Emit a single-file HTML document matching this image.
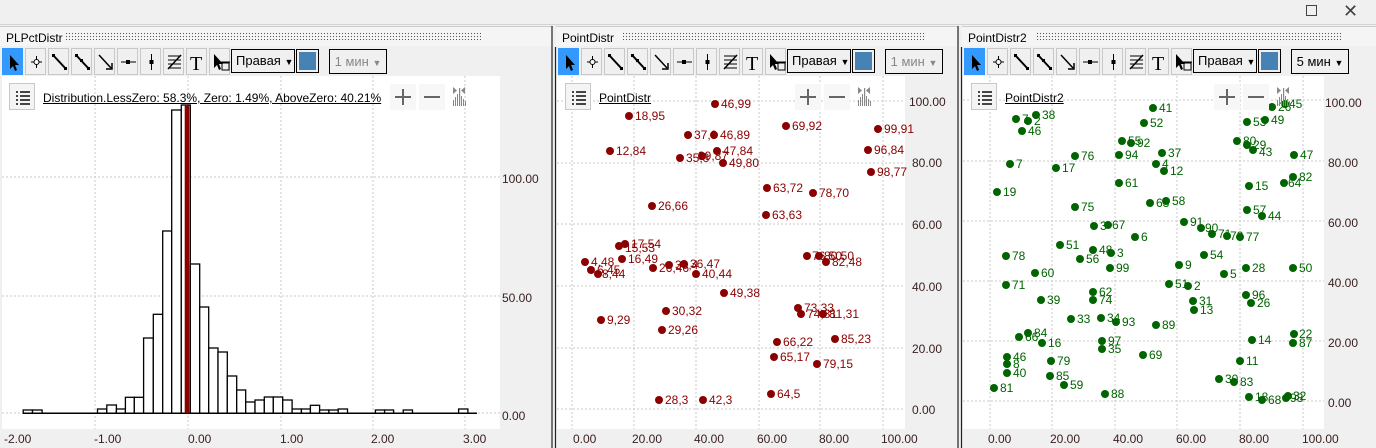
<!DOCTYPE html>
<html><head><meta charset="utf-8"><style>
*{margin:0;padding:0;box-sizing:border-box}
body{width:1376px;height:448px;overflow:hidden;background:#f0f0f0;font-family:"Liberation Sans",sans-serif;position:relative}
.a{position:absolute}
.title{font-size:12px;color:#000}
.dots{height:8px;background-image:radial-gradient(#555 0.6px,transparent 0.8px);background-size:3px 3px}
.btn{position:absolute;top:48px;width:21px;height:27px;background:#f0f0f0;border:1px solid #c8c8c8}
.btn.sel{background:#3399ff;border-color:#3399ff}
.btn svg{position:absolute;left:0;top:0}
.dd{position:absolute;top:49px;height:24px;border:1px solid #000;background:#f0f0f0;font-size:13px;line-height:22px;padding-left:4px;white-space:nowrap;overflow:hidden}
.col{position:absolute;top:49px;width:23px;height:24px;border:1px solid #000;background:#f0f0f0}
.col div{position:absolute;left:2px;top:2px;width:17px;height:18px;background:#4682b4}
.tf{position:absolute;top:49px;width:58px;height:25px;border:1px solid #000;background:#f0f0f0;font-size:13px;line-height:23px;text-align:center;color:#888;white-space:nowrap}
.lst{position:absolute;top:83px;width:26px;height:27px;border:1px solid #c8c8c8;background:#f4f4f4}
.ct{position:absolute;top:91px;font-size:12px;text-decoration:underline;color:#000;white-space:nowrap}
</style></head><body>
<div class="a" style="left:0;top:0;width:1376px;height:25px;background:#f0f0f0;border-bottom:1px solid #d4d4d4"></div>
<div class="a" style="left:1306px;top:5px;width:11px;height:11px;border:1px solid #444"></div>
<div class="a" style="left:1343px;top:1px;font-size:18px;color:#444">✕</div>

<div class="a" style="left:0;top:26px;width:553px;height:20px;background:#f5f5f5;border-top:1px solid #ccc"></div>
<div class="a title" style="left:6px;top:31px">PLPctDistr</div>
<div class="a dots" style="left:65px;top:32px;width:416px"></div>
<div class="a" style="left:556px;top:26px;width:402px;height:20px;background:#f5f5f5;border-top:1px solid #ccc"></div>
<div class="a title" style="left:562px;top:31px">PointDistr</div>
<div class="a dots" style="left:622px;top:32px;width:304px"></div>
<div class="a" style="left:962px;top:26px;width:414px;height:20px;background:#f5f5f5;border-top:1px solid #ccc"></div>
<div class="a title" style="left:968px;top:31px">PointDistr2</div>
<div class="a dots" style="left:1036px;top:32px;width:306px"></div>

<svg class="a" style="left:0;top:0" width="1376" height="448" xmlns="http://www.w3.org/2000/svg" font-family="Liberation Sans, sans-serif">
<rect x="2" y="76" width="498" height="353" fill="#fff"/>
<rect x="500" y="76" width="52" height="372" fill="#f0f0f0"/>
<g stroke="#c8c8c8" stroke-dasharray="2,2">
<line x1="95" y1="76" x2="95" y2="429"/><line x1="188" y1="76" x2="188" y2="429"/><line x1="281" y1="76" x2="281" y2="429"/><line x1="373" y1="76" x2="373" y2="429"/><line x1="465" y1="76" x2="465" y2="429"/>
<line x1="2" y1="177" x2="500" y2="177"/><line x1="2" y1="296" x2="500" y2="296"/><line x1="2" y1="413" x2="500" y2="413"/>
</g>
<g fill="#fff" stroke="#000" stroke-width="1.3">
<rect x="23.2" y="410" width="9.3" height="3.3"/><rect x="32.5" y="410" width="9.6" height="3.3"/>
<rect x="97.5" y="409" width="9.3" height="4.3"/><rect x="106.8" y="405" width="9.6" height="8.3"/><rect x="116.4" y="409" width="9" height="4.3"/>
<rect x="125.4" y="397.3" width="8.9" height="16"/><rect x="134.3" y="397.3" width="9.3" height="16"/>
<rect x="143.6" y="338" width="9.7" height="75.3"/><rect x="153.3" y="314.3" width="9.4" height="99"/>
<rect x="162.7" y="231" width="9" height="182.3"/><rect x="171.7" y="110" width="9.6" height="303.3"/>
<rect x="181.3" y="105" width="9" height="308.3"/><rect x="190.3" y="264" width="9.4" height="149.3"/>
<rect x="199.7" y="307" width="9" height="106.3"/><rect x="208.7" y="348" width="9.3" height="65.3"/>
<rect x="218" y="352" width="9.3" height="61.3"/><rect x="227.3" y="376" width="9.4" height="37.3"/>
<rect x="236.7" y="390" width="9" height="23.3"/><rect x="245.7" y="402" width="9.3" height="11.3"/>
<rect x="255" y="400" width="9.3" height="13.3"/><rect x="264.3" y="397" width="9" height="16.3"/>
<rect x="273.3" y="397" width="9.4" height="16.3"/><rect x="282.7" y="400" width="9.4" height="13.3"/>
<rect x="292.1" y="409" width="9.3" height="4.3"/><rect x="301.4" y="409" width="9" height="4.3"/>
<rect x="310.4" y="405.3" width="9.2" height="8"/><rect x="319.6" y="410" width="9.3" height="3.3"/>
<rect x="328.9" y="410" width="9.3" height="3.3"/><rect x="338.2" y="409" width="9.3" height="4.3"/>
<rect x="375.4" y="410" width="9.2" height="3.3"/><rect x="384.6" y="410" width="9" height="3.3"/>
<rect x="403.2" y="410" width="9.3" height="3.3"/><rect x="458.6" y="409" width="9.3" height="4.3"/>
</g>
<line x1="23" y1="413.3" x2="477" y2="413.3" stroke="#000" stroke-width="1.5"/>
<rect x="184.7" y="105" width="4.6" height="308.3" fill="#8b0000"/>
<g font-size="12" fill="#3a2020">
<text x="502" y="183">100.00</text><text x="502" y="302">50.00</text><text x="502" y="420">0.00</text>
<text x="4" y="443">-2.00</text><text x="94" y="443">-1.00</text><text x="188" y="443">0.00</text><text x="280" y="443">1.00</text><text x="371" y="443">2.00</text><text x="463" y="443">3.00</text>
</g>
<line x1="552" y1="26" x2="552" y2="448" stroke="#222" stroke-width="1.2"/>
<line x1="555.5" y1="47" x2="555.5" y2="448" stroke="#222" stroke-width="1.2"/>

<rect x="557" y="76" width="348" height="353" fill="#fff"/>
<rect x="905" y="76" width="52" height="372" fill="#f0f0f0"/>
<g stroke="#c8c8c8" stroke-dasharray="2,2">
<line x1="572" y1="76" x2="572" y2="429"/><line x1="634" y1="76" x2="634" y2="429"/><line x1="696" y1="76" x2="696" y2="429"/><line x1="759" y1="76" x2="759" y2="429"/><line x1="820" y1="76" x2="820" y2="429"/><line x1="883" y1="76" x2="883" y2="429"/>
<line x1="557" y1="101" x2="905" y2="101"/><line x1="557" y1="163" x2="905" y2="163"/><line x1="557" y1="224" x2="905" y2="224"/><line x1="557" y1="286" x2="905" y2="286"/><line x1="557" y1="348" x2="905" y2="348"/><line x1="557" y1="409" x2="905" y2="409"/>
</g>
<g font-size="12" fill="#3a2020">
<text x="909" y="106">100.00</text><text x="912" y="167">80.00</text><text x="912" y="229">60.00</text><text x="912" y="291">40.00</text><text x="912" y="353">20.00</text><text x="912" y="414">0.00</text>
<text x="573" y="443">0.00</text><text x="632" y="443">20.00</text><text x="694" y="443">40.00</text><text x="757" y="443">60.00</text><text x="819" y="443">80.00</text><text x="881" y="443">100.00</text>
</g>
<g fill="#8b0000" font-size="12">
<circle cx="715" cy="104" r="4"/><text x="721" y="108">46,99</text>
<circle cx="629" cy="116" r="4"/><text x="635" y="120">18,95</text>
<circle cx="786" cy="126" r="4"/><text x="792" y="130">69,92</text>
<circle cx="878" cy="129" r="4"/><text x="884" y="133">99,91</text>
<circle cx="688" cy="135" r="4"/><text x="694" y="139">37,9</text>
<circle cx="714" cy="135" r="4"/><text x="720" y="139">46,89</text>
<circle cx="717" cy="151" r="4"/><text x="723" y="155">47,84</text>
<circle cx="610" cy="151" r="4"/><text x="616" y="155">12,84</text>
<circle cx="868" cy="150" r="4"/><text x="874" y="154">96,84</text>
<circle cx="680" cy="158" r="4"/><text x="686" y="162">35,8</text>
<circle cx="702" cy="156" r="4"/><text x="698" y="160">39,87</text>
<circle cx="723" cy="163" r="4"/><text x="729" y="167">49,80</text>
<circle cx="871" cy="172" r="4"/><text x="877" y="176">98,77</text>
<circle cx="767" cy="188" r="4"/><text x="773" y="192">63,72</text>
<circle cx="813" cy="193" r="4"/><text x="819" y="197">78,70</text>
<circle cx="652" cy="206" r="4"/><text x="658" y="210">26,66</text>
<circle cx="766" cy="215" r="4"/><text x="772" y="219">63,63</text>
<circle cx="625" cy="244" r="4"/><text x="631" y="248">17,54</text>
<circle cx="619" cy="246" r="4"/><text x="625" y="252">15,53</text>
<circle cx="807" cy="256" r="4"/><text x="812" y="260">76,50</text>
<circle cx="819" cy="256" r="4"/><text x="824" y="260">80,50</text>
<circle cx="826" cy="262" r="4"/><text x="832" y="266">82,48</text>
<circle cx="585" cy="262" r="4"/><text x="591" y="266">4,48</text>
<circle cx="622" cy="259" r="4"/><text x="628" y="263">16,49</text>
<circle cx="653" cy="268" r="4"/><text x="659" y="272">26,46</text>
<circle cx="669" cy="265" r="4"/><text x="675" y="269">30,4</text>
<circle cx="684" cy="264" r="4"/><text x="690" y="268">36,47</text>
<circle cx="591" cy="270" r="4"/><text x="597" y="274">6,45</text>
<circle cx="598" cy="274" r="4"/><text x="602" y="278">8,44</text>
<circle cx="696" cy="274" r="4"/><text x="702" y="278">40,44</text>
<circle cx="724" cy="293" r="4"/><text x="730" y="297">49,38</text>
<circle cx="798" cy="308" r="4"/><text x="804" y="312">73,33</text>
<circle cx="801" cy="314" r="4"/><text x="807" y="318">74,31</text>
<circle cx="823" cy="314" r="4"/><text x="829" y="318">81,31</text>
<circle cx="666" cy="311" r="4"/><text x="672" y="315">30,32</text>
<circle cx="601" cy="320" r="4"/><text x="607" y="324">9,29</text>
<circle cx="662" cy="330" r="4"/><text x="668" y="334">29,26</text>
<circle cx="835" cy="339" r="4"/><text x="841" y="343">85,23</text>
<circle cx="777" cy="342" r="4"/><text x="783" y="346">66,22</text>
<circle cx="774" cy="357" r="4"/><text x="780" y="361">65,17</text>
<circle cx="817" cy="364" r="4"/><text x="823" y="368">79,15</text>
<circle cx="771" cy="394" r="4"/><text x="777" y="398">64,5</text>
<circle cx="659" cy="400" r="4"/><text x="665" y="404">28,3</text>
<circle cx="703" cy="400" r="4"/><text x="709" y="404">42,3</text>
</g>
<line x1="958" y1="26" x2="958" y2="448" stroke="#222" stroke-width="1.2"/>
<line x1="961.5" y1="47" x2="961.5" y2="448" stroke="#222" stroke-width="1.2"/>

<rect x="963" y="76" width="361" height="353" fill="#fff"/>
<rect x="1324" y="76" width="52" height="372" fill="#f0f0f0"/>
<g stroke="#c8c8c8" stroke-dasharray="2,2">
<line x1="990" y1="76" x2="990" y2="429"/><line x1="1052" y1="76" x2="1052" y2="429"/><line x1="1115" y1="76" x2="1115" y2="429"/><line x1="1177" y1="76" x2="1177" y2="429"/><line x1="1240" y1="76" x2="1240" y2="429"/><line x1="1303" y1="76" x2="1303" y2="429"/>
<line x1="963" y1="100" x2="1324" y2="100"/><line x1="963" y1="161" x2="1324" y2="161"/><line x1="963" y1="221" x2="1324" y2="221"/><line x1="963" y1="281" x2="1324" y2="281"/><line x1="963" y1="341" x2="1324" y2="341"/><line x1="963" y1="401" x2="1324" y2="401"/>
</g>
<g font-size="12" fill="#3a2020">
<text x="1325" y="107">100.00</text><text x="1328" y="167">80.00</text><text x="1328" y="227">60.00</text><text x="1328" y="287">40.00</text><text x="1328" y="347">20.00</text><text x="1328" y="407">0.00</text>
<text x="988" y="443">0.00</text><text x="1050" y="443">20.00</text><text x="1113" y="443">40.00</text><text x="1176" y="443">60.00</text><text x="1239" y="443">80.00</text><text x="1302" y="443">100.00</text>
</g>
<g fill="#006400" font-size="12">
<circle cx="1153" cy="108" r="4"/><text x="1159" y="112">41</text>
<circle cx="1272" cy="107" r="4"/><text x="1278" y="111">26</text>
<circle cx="1285" cy="104" r="4"/><text x="1289" y="108">45</text>
<circle cx="1265" cy="120" r="4"/><text x="1271" y="124">49</text>
<circle cx="1016" cy="119" r="4"/><text x="1022" y="123">7</text>
<circle cx="1036" cy="115" r="4"/><text x="1042" y="119">38</text>
<circle cx="1028" cy="121" r="4"/><text x="1034" y="125">2</text>
<circle cx="1022" cy="131" r="4"/><text x="1028" y="135">46</text>
<circle cx="1144" cy="123" r="4"/><text x="1150" y="127">52</text>
<circle cx="1247" cy="122" r="4"/><text x="1253" y="126">53</text>
<circle cx="1122" cy="141" r="4"/><text x="1128" y="145">55</text>
<circle cx="1131" cy="143" r="4"/><text x="1137" y="147">92</text>
<circle cx="1237" cy="141" r="4"/><text x="1243" y="145">80</text>
<circle cx="1247" cy="145" r="4"/><text x="1253" y="149">29</text>
<circle cx="1253" cy="150" r="4"/><text x="1259" y="156">43</text>
<circle cx="1162" cy="153" r="4"/><text x="1168" y="157">37</text>
<circle cx="1294" cy="155" r="4"/><text x="1300" y="159">47</text>
<circle cx="1119" cy="155" r="4"/><text x="1125" y="159">94</text>
<circle cx="1075" cy="156" r="4"/><text x="1081" y="160">76</text>
<circle cx="1010" cy="164" r="4"/><text x="1016" y="168">7</text>
<circle cx="1056" cy="168" r="4"/><text x="1062" y="172">17</text>
<circle cx="1156" cy="164" r="4"/><text x="1162" y="168">4</text>
<circle cx="1164" cy="171" r="4"/><text x="1170" y="175">12</text>
<circle cx="1293" cy="177" r="4"/><text x="1299" y="181">82</text>
<circle cx="1284" cy="183" r="4"/><text x="1288" y="187">64</text>
<circle cx="1249" cy="186" r="4"/><text x="1255" y="190">15</text>
<circle cx="1119" cy="183" r="4"/><text x="1125" y="187">61</text>
<circle cx="997" cy="192" r="4"/><text x="1003" y="196">19</text>
<circle cx="1150" cy="203" r="4"/><text x="1156" y="207">63</text>
<circle cx="1166" cy="201" r="4"/><text x="1172" y="205">58</text>
<circle cx="1075" cy="207" r="4"/><text x="1081" y="211">75</text>
<circle cx="1247" cy="210" r="4"/><text x="1253" y="214">57</text>
<circle cx="1262" cy="216" r="4"/><text x="1268" y="220">44</text>
<circle cx="1184" cy="222" r="4"/><text x="1190" y="226">91</text>
<circle cx="1201" cy="228" r="4"/><text x="1205" y="232">90</text>
<circle cx="1094" cy="226" r="4"/><text x="1100" y="230">3</text>
<circle cx="1108" cy="225" r="4"/><text x="1112" y="229">67</text>
<circle cx="1212" cy="234" r="4"/><text x="1218" y="238">71</text>
<circle cx="1227" cy="236" r="4"/><text x="1230" y="240">72</text>
<circle cx="1240" cy="237" r="4"/><text x="1246" y="241">77</text>
<circle cx="1135" cy="237" r="4"/><text x="1141" y="241">6</text>
<circle cx="1060" cy="245" r="4"/><text x="1066" y="249">51</text>
<circle cx="1093" cy="250" r="4"/><text x="1099" y="254">48</text>
<circle cx="1111" cy="253" r="4"/><text x="1117" y="257">3</text>
<circle cx="1204" cy="255" r="4"/><text x="1210" y="259">54</text>
<circle cx="1080" cy="259" r="4"/><text x="1086" y="263">56</text>
<circle cx="1006" cy="256" r="4"/><text x="1012" y="260">78</text>
<circle cx="1179" cy="265" r="4"/><text x="1185" y="269">9</text>
<circle cx="1110" cy="268" r="4"/><text x="1116" y="272">99</text>
<circle cx="1246" cy="268" r="4"/><text x="1252" y="272">28</text>
<circle cx="1293" cy="268" r="4"/><text x="1299" y="272">50</text>
<circle cx="1035" cy="273" r="4"/><text x="1041" y="277">60</text>
<circle cx="1224" cy="274" r="4"/><text x="1230" y="278">5</text>
<circle cx="1169" cy="284" r="4"/><text x="1175" y="288">51</text>
<circle cx="1188" cy="286" r="4"/><text x="1194" y="290">2</text>
<circle cx="1006" cy="285" r="4"/><text x="1012" y="289">71</text>
<circle cx="1093" cy="292" r="4"/><text x="1099" y="296">62</text>
<circle cx="1093" cy="300" r="4"/><text x="1099" y="304">74</text>
<circle cx="1246" cy="295" r="4"/><text x="1252" y="299">96</text>
<circle cx="1041" cy="300" r="4"/><text x="1047" y="304">39</text>
<circle cx="1193" cy="301" r="4"/><text x="1199" y="305">31</text>
<circle cx="1251" cy="303" r="4"/><text x="1257" y="307">26</text>
<circle cx="1194" cy="310" r="4"/><text x="1200" y="314">13</text>
<circle cx="1071" cy="319" r="4"/><text x="1077" y="323">33</text>
<circle cx="1101" cy="318" r="4"/><text x="1107" y="322">34</text>
<circle cx="1116" cy="322" r="4"/><text x="1122" y="326">93</text>
<circle cx="1156" cy="325" r="4"/><text x="1162" y="329">89</text>
<circle cx="1028" cy="333" r="4"/><text x="1034" y="337">84</text>
<circle cx="1019" cy="337" r="4"/><text x="1025" y="341">66</text>
<circle cx="1042" cy="343" r="4"/><text x="1048" y="347">16</text>
<circle cx="1102" cy="341" r="4"/><text x="1108" y="345">97</text>
<circle cx="1102" cy="349" r="4"/><text x="1108" y="353">35</text>
<circle cx="1252" cy="340" r="4"/><text x="1258" y="344">14</text>
<circle cx="1294" cy="334" r="4"/><text x="1299" y="338">22</text>
<circle cx="1293" cy="343" r="4"/><text x="1299" y="347">87</text>
<circle cx="1143" cy="355" r="4"/><text x="1149" y="359">69</text>
<circle cx="1007" cy="357" r="4"/><text x="1013" y="361">46</text>
<circle cx="1007" cy="364" r="4"/><text x="1013" y="368">8</text>
<circle cx="1051" cy="361" r="4"/><text x="1057" y="365">79</text>
<circle cx="1007" cy="373" r="4"/><text x="1013" y="377">40</text>
<circle cx="1240" cy="361" r="4"/><text x="1246" y="365">11</text>
<circle cx="1050" cy="376" r="4"/><text x="1056" y="380">85</text>
<circle cx="1064" cy="385" r="4"/><text x="1070" y="389">59</text>
<circle cx="1219" cy="379" r="4"/><text x="1225" y="383">30</text>
<circle cx="1234" cy="382" r="4"/><text x="1240" y="386">83</text>
<circle cx="1105" cy="394" r="4"/><text x="1111" y="398">88</text>
<circle cx="994" cy="388" r="4"/><text x="1000" y="392">81</text>
<circle cx="1249" cy="397" r="4"/><text x="1255" y="401">18</text>
<circle cx="1262" cy="400" r="4"/><text x="1268" y="404">68</text>
<circle cx="1288" cy="396" r="4"/><text x="1293" y="400">32</text>
<circle cx="1286" cy="398" r="4"/><text x="1290" y="402">98</text>
</g>
</svg>

<div id="t1" class="a" style="left:0;top:0"></div>
<script>
var tpl=function(L,title,tf,tfc,cw){
var icons=[
'<path d="M7 6 L7 20 L10 17 L12 22 L14 21 L12 16 L16 16 Z" fill="#000"/>',
'<line x1="5" y1="13" x2="16" y2="13" stroke="#000"/><line x1="10.5" y1="7" x2="10.5" y2="19" stroke="#000"/><circle cx="10.5" cy="13" r="2.5" fill="#fff" stroke="#000"/>',
'<line x1="4" y1="6" x2="17" y2="20" stroke="#000" stroke-width="2"/><rect x="3" y="5" width="3" height="3"/><rect x="15" y="18" width="3" height="3"/>',
'<line x1="4" y1="6" x2="17" y2="20" stroke="#000" stroke-width="2"/><rect x="3" y="5" width="3" height="3"/><rect x="8" y="10" width="3" height="3"/><rect x="15" y="18" width="3" height="3"/>',
'<line x1="4" y1="6" x2="16" y2="19" stroke="#000" stroke-width="1.5"/><path d="M11 20 L17 20 L17 14" fill="none" stroke="#000" stroke-width="1.5"/>',
'<line x1="3" y1="13" x2="18" y2="13" stroke="#000"/><rect x="8" y="11" width="4" height="4"/>',
'<line x1="10.5" y1="5" x2="10.5" y2="21" stroke="#000"/><rect x="8.5" y="11" width="4" height="4"/>',
'<g stroke="#000"><line x1="4" y1="7" x2="17" y2="7"/><line x1="4" y1="11" x2="17" y2="11"/><line x1="4" y1="15" x2="17" y2="15"/><line x1="4" y1="19" x2="17" y2="19"/><line x1="4" y1="20" x2="17" y2="6" stroke-width="1.5"/></g>',
'<text x="3" y="21" font-family="Liberation Serif" font-size="20">T</text>',
'<path d="M4 5 L4 19 L7 16 L9 21 L11 20 L9 15 L13 15 Z" fill="#000"/><rect x="12" y="14" width="7" height="7" fill="none" stroke="#000"/><line x1="11" y1="13" x2="20" y2="13" stroke="#000"/>'];
var xs=[2,25,48,71,94,117,140,163,186,209],h='';
for(var i=0;i<10;i++)h+='<div class="btn'+(i==0?' sel':'')+'" style="left:'+(L+xs[i])+'px"><svg width="21" height="27">'+icons[i]+'</svg></div>';
h+='<div class="dd" style="left:'+(L+231)+'px;width:64px">Правая <span style="font-size:9px">▼</span></div>';
h+='<div class="col" style="left:'+(L+296)+'px"><div></div></div>';
h+='<div class="tf" style="left:'+(L+329)+'px;color:'+tfc+'">'+tf+' <span style="font-size:9px">▼</span></div>';
h+='<div class="lst" style="left:'+(L+9)+'px"><svg width="26" height="27"><g stroke="#444" stroke-width="2"><line x1="6" y1="8" x2="8" y2="8"/><line x1="10" y1="8" x2="20" y2="8"/><line x1="6" y1="12" x2="8" y2="12"/><line x1="10" y1="12" x2="20" y2="12"/><line x1="6" y1="16" x2="8" y2="16"/><line x1="10" y1="16" x2="20" y2="16"/><line x1="6" y1="20" x2="8" y2="20"/><line x1="10" y1="20" x2="20" y2="20"/></g></svg></div>';
h+='<div class="ct" style="left:'+(L+43)+'px">'+title+'</div>';
var r=cw;
h+='<svg class="a" style="left:'+(L+r-110)+'px;top:84px" width="80" height="26"><rect x="0" y="0" width="26" height="26" fill="#f7f7f7"/><rect x="29" y="0" width="26" height="26" fill="#f7f7f7"/><g stroke="#666" stroke-width="2"><line x1="5" y1="13" x2="21" y2="13"/><line x1="13" y1="5" x2="13" y2="21"/><line x1="34" y1="13" x2="50" y2="13"/></g><g fill="#888"><path d="M63 3 L63 10 L67 6.5Z"/><path d="M75 3 L75 10 L71 6.5Z"/><rect x="63" y="16" width="1" height="6"/><rect x="65" y="13" width="1" height="9"/><rect x="67" y="10" width="1" height="12"/><rect x="69" y="4" width="1.2" height="18"/><rect x="71" y="12" width="1" height="10"/><rect x="73" y="15" width="1" height="7"/><rect x="75" y="17" width="1" height="5"/></g></svg>';
return h;};
document.getElementById('t1').innerHTML=
tpl(0,'Distribution.LessZero: 58.3%, Zero: 1.49%, AboveZero: 40.21%','1 мин','#888',500)+
tpl(556,'PointDistr','1 мин','#888',349)+
tpl(962,'PointDistr2','5 мин','#000',362);
</script>
</body></html>
